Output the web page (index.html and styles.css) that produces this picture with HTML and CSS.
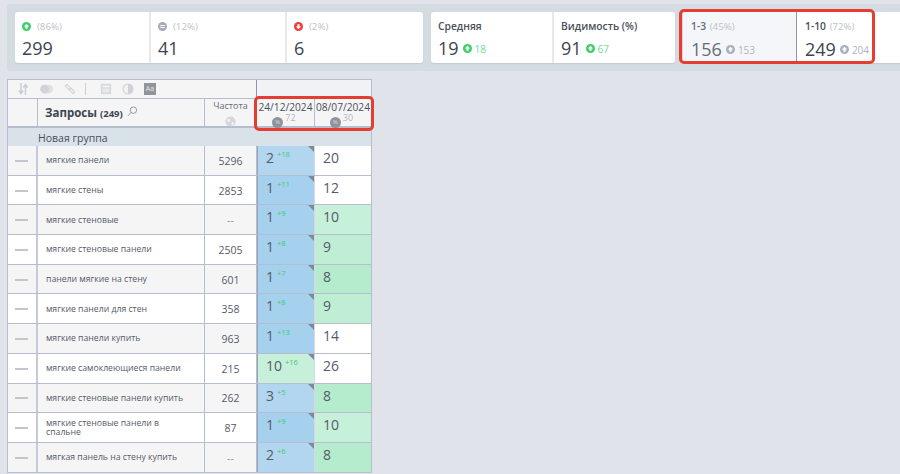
FILE: index.html
```html
<!DOCTYPE html>
<html lang="en">
<head>
  <meta charset="UTF-8" />
  <title>Запросы</title>
  <link rel="stylesheet" href="styles.css">
</head>
<body>
  <!-- summary -->
  <div class="summary">
    <div class="group group-main">
      <div class="stat">
        <div class="stat-top"><svg class="ic" viewBox="0 0 10 10"><circle cx="5" cy="5" r="5" fill="#3ecf6a"/><path d="M5 2 8 5H6.2V7.6H3.8V5H2z" fill="#fff"/></svg><span class="pct">(86%)</span></div>
        <div class="num">299</div>
      </div>
      <div class="stat">
        <div class="stat-top"><svg class="ic" viewBox="0 0 10 10"><circle cx="5" cy="5" r="5" fill="#a3abbb"/><path d="M2.4 3.4h5.2v1.1H2.4zM2.4 5.5h5.2v1.1H2.4z" fill="#fff"/></svg><span class="pct">(12%)</span></div>
        <div class="num">41</div>
      </div>
      <div class="stat stat-grow">
        <div class="stat-top"><svg class="ic" viewBox="0 0 10 10"><circle cx="5" cy="5" r="5" fill="#f23b3b"/><path d="M5 8 2 5H3.8V2.4H6.2V5H8z" fill="#fff"/></svg><span class="pct">(2%)</span></div>
        <div class="num">6</div>
      </div>
    </div>
    <div class="group group-avg">
      <div class="stat stat-avg">
        <div class="stat-title">Средняя</div>
        <div class="stat-line"><span class="num">19</span><svg class="ic ic-delta" viewBox="0 0 10 10"><circle cx="5" cy="5" r="5" fill="#3ecf6a"/><path d="M5 2 8 5H6.2V7.6H3.8V5H2z" fill="#fff"/></svg><span class="delta">18</span></div>
      </div>
      <div class="stat stat-vis">
        <div class="stat-title">Видимость (%)</div>
        <div class="stat-line"><span class="num">91</span><svg class="ic ic-delta" viewBox="0 0 10 10"><circle cx="5" cy="5" r="5" fill="#3ecf6a"/><path d="M5 2 8 5H6.2V7.6H3.8V5H2z" fill="#fff"/></svg><span class="delta">67</span></div>
      </div>
    </div>
    <div class="group group-top">
      <div class="stat stat-top3">
        <div class="stat-title">1-3 <span class="pct">(45%)</span></div>
        <div class="stat-line"><span class="num">156</span><svg class="ic ic-delta" viewBox="0 0 10 10"><circle cx="5" cy="5" r="5" fill="#a9b1bf"/><path d="M5 2 8 5H6.2V7.6H3.8V5H2z" fill="#fff"/></svg><span class="delta delta-grey">153</span></div>
      </div>
      <div class="stat stat-top10">
        <div class="stat-title">1-10 <span class="pct">(72%)</span></div>
        <div class="stat-line"><span class="num">249</span><svg class="ic ic-delta" viewBox="0 0 10 10"><circle cx="5" cy="5" r="5" fill="#a9b1bf"/><path d="M5 2 8 5H6.2V7.6H3.8V5H2z" fill="#fff"/></svg><span class="delta delta-grey">204</span></div>
      </div>
    </div>
    <div class="mark mark-top"></div>
  </div>

  <!-- table -->
  <div class="tbl">
    <div class="toolbar">
      <div class="tools">
        <svg class="tool tool-sort" viewBox="0 0 10 12"><path d="M3 0v10M.8 7.500 3 10.500l2.200-3M7.500 12V2M5.300 4.500 7.500 1.500l2.200 3" fill="none" stroke="#c9cdd3" stroke-width="1.500"/></svg>
        <svg class="tool tool-wide" viewBox="0 0 16 12"><rect y="1" width="15" height="10" rx="5" fill="#dfe1e4"/><circle cx="5.500" cy="6" r="5" fill="#d0d3d8"/></svg>
        <svg class="tool" viewBox="0 0 14 14"><path d="M1.500 3.500 3.500 1.500l4 4-2 2zM6.500 8.500l2-2 4 4-2 2z" fill="none" stroke="#d3d6da" stroke-width="1.300"/></svg>
        <span class="tool-sep"></span>
        <svg class="tool" viewBox="0 0 14 14"><rect x="1" y="1" width="12" height="12" fill="#d6d8dc"/><rect x="3" y="3" width="8" height="2" fill="#f5f5f6"/><rect x="3" y="6.500" width="8" height="4.500" fill="#e9eaec"/></svg>
        <svg class="tool" viewBox="0 0 14 14"><circle cx="7" cy="7" r="5.800" fill="#f2f2f3" stroke="#d3d6da" stroke-width="1.400"/><path d="M7 1.200a5.800 5.800 0 0 1 0 11.600z" fill="#cfd2d6"/></svg>
        <span class="tool-aa">Aa</span>
      </div>
      <div class="toolbar-side"></div>
    </div>

    <div class="head">
      <div class="head-first"></div>
      <div class="head-query"><b>Запросы</b> <b class="count">(249)</b>
        <svg class="search" viewBox="0 0 12 12"><circle cx="7" cy="4.500" r="3.500" fill="none" stroke="#8d939b" stroke-width="1"/><path d="M4.500 7 1 10.800" stroke="#8d939b" stroke-width="1"/></svg>
      </div>
      <div class="head-freq">
        <span>Частота</span>
        <svg class="globe" viewBox="0 0 12 12"><circle cx="6" cy="6" r="5.500" fill="#d3d6da"/><path d="M3 2.500 6 4 5 6.500 2.500 6zM7.500 6.500 10 7 8 10.500 7 9z" fill="#f5f5f6"/></svg>
      </div>
      <div class="head-date">
        <span>24/12/2024</span>
        <div class="date-sub"><span class="pct-badge">%</span><span class="date-num">72</span></div>
      </div>
      <div class="head-date">
        <span>08/07/2024</span>
        <div class="date-sub"><span class="pct-badge">%</span><span class="date-num">30</span></div>
      </div>
    </div>

    <div class="group-row">Новая группа</div>

    <div class="row alt">
      <div class="c-dash"><i></i></div><div class="c-query">мягкие панели</div><div class="c-freq">5296</div>
      <div class="c-pos blue2">2<sup>+18</sup></div><div class="c-pos2">20</div>
    </div>
    <div class="row">
      <div class="c-dash"><i></i></div><div class="c-query">мягкие стены</div><div class="c-freq">2853</div>
      <div class="c-pos blue1">1<sup>+11</sup></div><div class="c-pos2">12</div>
    </div>
    <div class="row alt">
      <div class="c-dash"><i></i></div><div class="c-query">мягкие стеновые</div><div class="c-freq muted">--</div>
      <div class="c-pos blue1">1<sup>+9</sup></div><div class="c-pos2 green10">10</div>
    </div>
    <div class="row">
      <div class="c-dash"><i></i></div><div class="c-query">мягкие стеновые панели</div><div class="c-freq">2505</div>
      <div class="c-pos blue1">1<sup>+8</sup></div><div class="c-pos2 green9">9</div>
    </div>
    <div class="row alt">
      <div class="c-dash"><i></i></div><div class="c-query">панели мягкие на стену</div><div class="c-freq">601</div>
      <div class="c-pos blue1">1<sup>+7</sup></div><div class="c-pos2 green8">8</div>
    </div>
    <div class="row">
      <div class="c-dash"><i></i></div><div class="c-query">мягкие панели для стен</div><div class="c-freq">358</div>
      <div class="c-pos blue1">1<sup>+8</sup></div><div class="c-pos2 green9">9</div>
    </div>
    <div class="row alt">
      <div class="c-dash"><i></i></div><div class="c-query">мягкие панели купить</div><div class="c-freq">963</div>
      <div class="c-pos blue1">1<sup>+13</sup></div><div class="c-pos2">14</div>
    </div>
    <div class="row">
      <div class="c-dash"><i></i></div><div class="c-query">мягкие самоклеющиеся панели</div><div class="c-freq">215</div>
      <div class="c-pos green10">10<sup>+16</sup></div><div class="c-pos2">26</div>
    </div>
    <div class="row alt">
      <div class="c-dash"><i></i></div><div class="c-query">мягкие стеновые панели купить</div><div class="c-freq">262</div>
      <div class="c-pos blue2">3<sup>+5</sup></div><div class="c-pos2 green8">8</div>
    </div>
    <div class="row">
      <div class="c-dash"><i></i></div><div class="c-query">мягкие стеновые панели в спальне</div><div class="c-freq">87</div>
      <div class="c-pos blue1">1<sup>+9</sup></div><div class="c-pos2 green10">10</div>
    </div>
    <div class="row alt">
      <div class="c-dash"><i></i></div><div class="c-query">мягкая панель на стену купить</div><div class="c-freq muted">--</div>
      <div class="c-pos blue2">2<sup>+6</sup></div><div class="c-pos2 green8">8</div>
    </div>

    <div class="mark mark-dates"></div>
  </div>
</body>
</html>
```

FILE: styles.css
```css
*{box-sizing:border-box;}
html,body{height:100%;}
body{margin:0;padding:4px 0 0 7px;background:#e0e4ea;font-family:"Open Sans",sans-serif;color:#3d4450;overflow:hidden;width:900px;height:474px;}

/* summary */
.summary{position:relative;display:flex;gap:8px;width:893px;height:67px;padding:8px 0 8px 8px;background:#d5dce1;border-radius:3px 0 0 3px;}
.group{display:flex;height:51px;background:#fff;border-radius:3px;box-shadow:0 1px 1px rgba(0,0,0,.08);}
.group-main{width:408px;}
.group-avg{width:244px;}
.group-top{flex:1;border-radius:3px 0 0 3px;}
.stat{width:136px;padding:9px 7px 0;border-right:2px solid #e6e8ec;}
.stat-grow{flex:1;border-right:none;}
.stat-top{display:flex;align-items:center;height:11px;}
.ic{width:9px;height:9px;flex:none;}
.pct{font-size:9.700px;color:#bcc1cb;margin-left:6px;}
.num{font-size:18px;line-height:24px;color:#3d4450;}
.stat-top + .num{margin-top:4px;}
.stat-avg{width:123px;padding-top:7px;border-right:2px solid #e6e8ec;}
.stat-vis{width:121px;padding-top:7px;border-right:none;}
.stat-title{font-size:10.300px;font-weight:600;line-height:14px;color:#4a505b;white-space:nowrap;}
.stat-title .pct{margin-left:1px;font-weight:400;}
.stat-line{display:flex;align-items:center;margin-top:3px;}
.ic-delta{margin-left:4px;}
.delta{font-size:10px;color:#6fdc97;margin-left:3px;padding-top:1px;}
.delta-grey{color:#aeb4bf;}
.stat-top3{width:114px;background:#f4f6f9;border-right:1px solid #8f95a3;padding-top:7px;padding-left:8px;}
.stat-top3 .num,.stat-top3 .stat-title{color:#666c78;}
.stat-top10{flex:1;padding:7px 0 0 8px;border-right:none;}
.mark{position:absolute;border:3px solid #e63d33;border-radius:5px;pointer-events:none;}
.mark-top{left:672px;top:5px;width:196px;height:55px;}

/* table */
.tbl{position:relative;width:365px;margin-top:8px;}
.toolbar{display:grid;grid-template-columns:249px 1fr;height:19px;background:#f5f5f6;border:1px solid #b6bdcf;border-bottom:none;}
.tools{display:flex;align-items:center;gap:10px;padding-left:10px;border-right:1px solid #8f95a3;}
.toolbar-side{background:#f0f2f5;}
.tool{width:12px;height:12px;flex:none;}
.tool-sort{width:10px;margin-right:2px;}
.tool-wide{width:14px;}
.tool-sep{width:1px;height:12px;background:#ccd0d6;margin:0 4px 0 -1px;}
.tool-aa{width:12px;height:12px;background:#90959b;color:#e6e7e9;font-size:7px;line-height:12px;text-align:center;}
.head{display:grid;grid-template-columns:30px 167px 52px 58px 1fr;height:30px;background:#f5f5f6;border:1px solid #b6bdcf;border-bottom:2px solid #b6bdcf;}
.head>div{border-right:1px solid #b6bdcf;}
.head>div:last-child{border-right:none;}
.head-query{padding:5px 0 0 7px;font-size:11.500px;line-height:18px;color:#3d4450;white-space:nowrap;}
.head-query .count{font-size:9.500px;}
.search{width:11px;height:11px;margin-left:1px;}
.head-freq{display:flex;flex-direction:column;align-items:center;font-size:9px;color:#666c78;padding-top:1px;line-height:12px;}
.globe{width:11px;height:11px;margin-top:4px;}
.head-date{font-size:10.200px;line-height:12px;color:#4a505b;text-align:center;padding-top:2px;white-space:nowrap;}
.date-sub{display:flex;justify-content:center;height:12px;padding-right:3px;}
.pct-badge{width:11px;height:11px;border-radius:50%;background:#8f949b;color:#d8dadd;font-size:6px;line-height:11px;text-align:center;margin-top:4px;}
.date-num{font-size:9px;line-height:10px;color:#b2b6bd;margin-left:2px;}
.group-row{height:18px;padding:1px 0 0 30px;font-size:10.500px;line-height:18px;background:#d9e2e9;color:#4a505b;border-left:1px solid #b6bdcf;border-right:1px solid #b6bdcf;}
.row{display:grid;grid-template-columns:30px 167px 52px 58px 1fr;height:29.700px;background:#fff;border-left:1px solid #b6bdcf;border-right:1px solid #b6bdcf;border-bottom:1px solid #b6bdcf;}
.row.alt{background:#f5f5f6;}
.c-dash{display:flex;align-items:center;justify-content:center;border-right:2px solid #c4cad8;padding:1px 1px 0 0;}
.c-dash i{width:13px;height:2px;background:#c4c6c9;}
.c-query{display:flex;align-items:center;padding:1px 14px 0 8px;font-size:8.700px;line-height:9px;color:#555b66;border-right:1px solid #b6bdcf;}
.c-freq{display:flex;align-items:center;justify-content:center;padding-top:1px;font-size:10.500px;color:#555b66;border-right:1px solid #b6bdcf;}
.c-freq.muted{color:#8f949c;}
.c-pos,.c-pos2{font-size:14px;line-height:20px;padding:2px 0 0 8px;color:#555b66;}
.c-pos2{background:#fff;}
.c-pos{position:relative;padding-left:8px;border-left:1px solid #9aa2b5;border-right:1px solid #d5d9e0;}
.c-pos::after{content:"";position:absolute;top:0;right:0;border-style:solid;border-width:0 6px 6px 0;border-color:transparent #7d8a9b transparent transparent;}
.c-pos sup{font-size:7.500px;line-height:0;color:#3ecb6e;margin-left:3px;vertical-align:6px;}
.blue1{background:#a5d0ee;}
.blue2{background:#b2d6ef;}
.c-pos2.green8,.green8{background:#b6ecce;}
.c-pos2.green9,.green9{background:#bfeed5;}
.c-pos2.green10,.green10{background:#c7f0da;}
.mark-dates{left:247px;top:17px;width:120px;height:35px;}
```
